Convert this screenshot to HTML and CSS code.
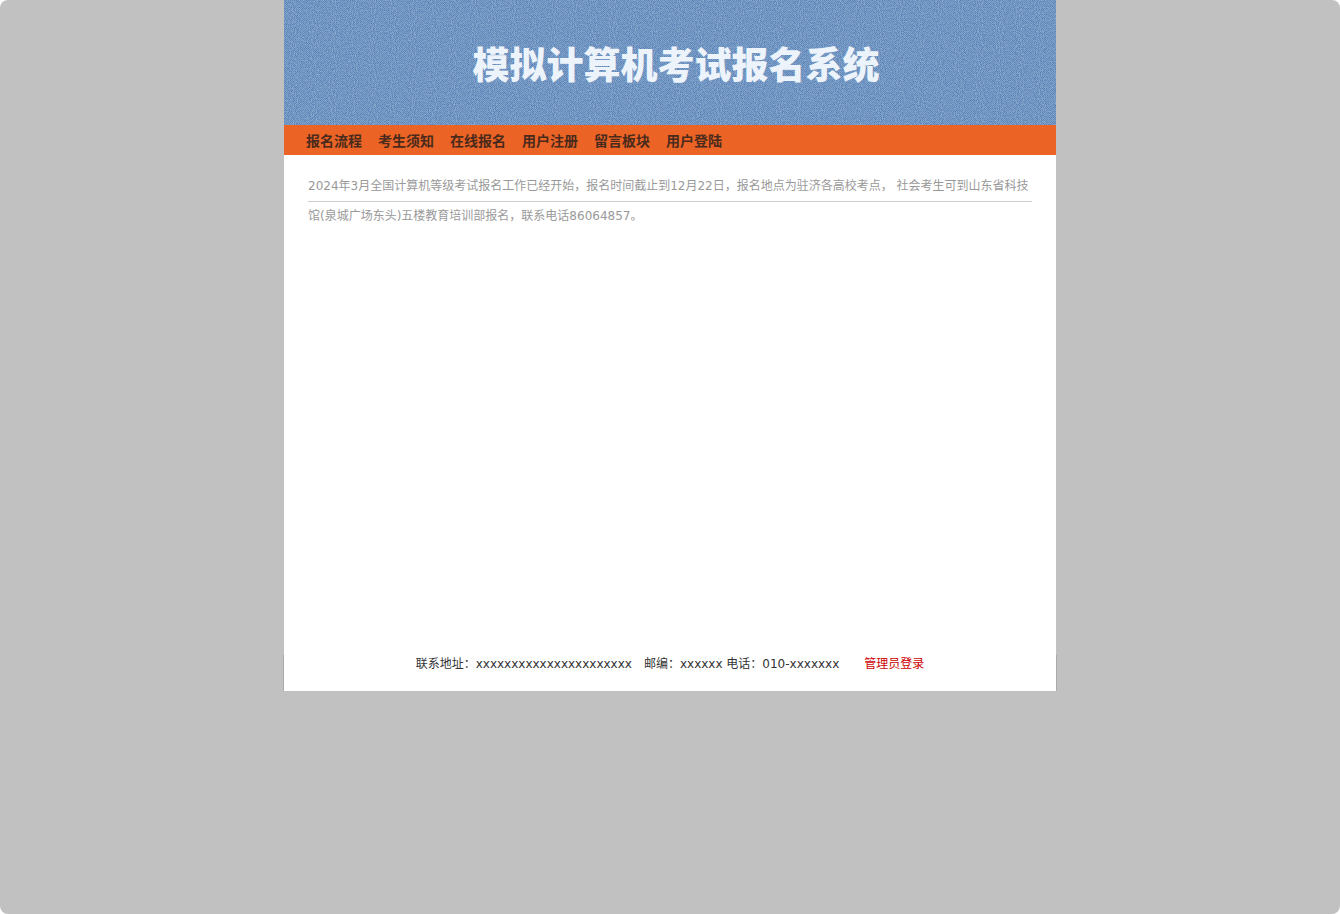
FILE: index.html
```html
<!DOCTYPE html>
<html lang="zh-CN">
<head>
    <meta charset="UTF-8">
    <meta name="viewport" content="width=device-width, initial-scale=1.0">
    <title>模拟计算机考试报名系统</title>
    <link rel="stylesheet" href="styles.css">
</head>
<body>

    <div class="container">
        <header class="banner">
            <h1>模拟计算机考试报名系统</h1>
        </header>

        <nav class="menu">
            <a href="#">报名流程</a>
            <a href="#">考生须知</a>
            <a href="#">在线报名</a>
            <a href="#">用户注册</a>
            <a href="#">留言板块</a>
            <a href="#">用户登陆</a>
        </nav>

        <main class="content">
            <p class="notice">2024年3月全国计算机等级考试报名工作已经开始，报名时间截止到12月22日，报名地点为驻济各高校考点， 社会考生可到山东省科技馆(泉城广场东头)五楼教育培训部报名，联系电话86064857。</p>
        </main>

        <footer class="footer">
            <span>联系地址：xxxxxxxxxxxxxxxxxxxxxx</span>
            <span class="contact">邮编：xxxxxx 电话：010-xxxxxxx</span>
            <a href="#">管理员登录</a>
        </footer>
    </div>

</body>
</html>
```

FILE: styles.css
```css
/* General page styles */
html {
    background-color: #fff;
}

body {
    margin: 0;
    min-height: 100vh;
    background-color: #c1c1c1;
    border-radius: 8px;
    font-family: "DejaVu Sans", "Noto Sans CJK SC", sans-serif;
    font-size: 12px;
    color: #333;
}

.container {
    max-width: 772px;
    margin: 0 auto;
    background-color: #fff;
}

/* Banner with a fine dithered texture */
.banner {
    display: flex;
    align-items: center;
    justify-content: center;
    height: 125px;
    padding-left: 12px;
    background-color: #5480b5;
    background-image:
        url("data:image/svg+xml,%3Csvg xmlns='http://www.w3.org/2000/svg' width='386' height='125'%3E%3Cfilter id='n' x='0' y='0' width='100%25' height='100%25' color-interpolation-filters='sRGB'%3E%3CfeTurbulence type='fractalNoise' baseFrequency='0.95 0.7' numOctaves='1' seed='4'/%3E%3CfeColorMatrix values='0 0 0 0 0.64 0 0 0 0 0.73 0 0 0 0 0.84 1.8 0 0 0 -0.68'/%3E%3C/filter%3E%3Crect width='386' height='125' filter='url(%23n)'/%3E%3C/svg%3E"),
        repeating-conic-gradient(rgba(165, 190, 220, 0.35) 0 25%, transparent 0 50%);
    background-size: 386px 125px, 2px 2px;
}

.banner h1 {
    margin: 0;
    font-family: "Noto Sans CJK SC", sans-serif;
    font-size: 37px;
    line-height: 48px;
    font-weight: 900;
    color: #edf3fa;
}

/* Menu bar */
.menu {
    display: flex;
    flex-wrap: wrap;
    gap: 0 16px;
    padding: 0 22px;
    background-color: #eb6425;
}

.menu a {
    font-family: KaiTi, STKaiti, "Noto Sans CJK SC", serif;
    font-size: 14px;
    line-height: 30px;
    font-weight: bold;
    color: #4a2a1c;
    text-decoration: none;
}

/* Content */
.content {
    min-height: 484px;
    padding: 16px 24px 0;
}

.notice {
    height: 30px;
    margin: 0;
    line-height: 30px;
    color: #999;
    border-bottom: 1px solid #ccc;
}

/* Footer */
.footer {
    display: flex;
    justify-content: center;
    margin: 0 -1px;
    padding-bottom: 18px;
    line-height: 18px;
    border: solid #aaa;
    border-width: 0 1px;
}

.footer .contact {
    margin: 0 25px 0 12px;
}

.footer a {
    color: #c00;
    text-decoration: none;
}
```
